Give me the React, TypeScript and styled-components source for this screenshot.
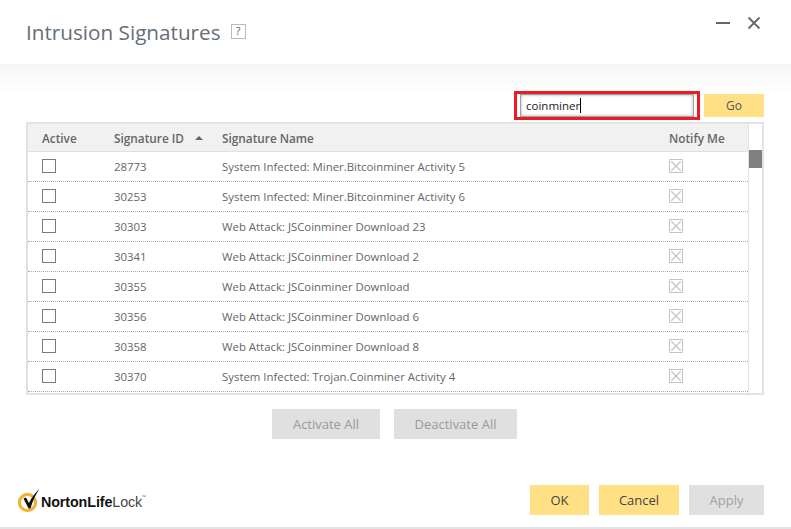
import styled, { createGlobalStyle } from "styled-components";

const rows = [
  { id: "28773", name: "System Infected: Miner.Bitcoinminer Activity 5" },
  { id: "30253", name: "System Infected: Miner.Bitcoinminer Activity 6" },
  { id: "30303", name: "Web Attack: JSCoinminer Download 23" },
  { id: "30341", name: "Web Attack: JSCoinminer Download 2" },
  { id: "30355", name: "Web Attack: JSCoinminer Download" },
  { id: "30356", name: "Web Attack: JSCoinminer Download 6" },
  { id: "30358", name: "Web Attack: JSCoinminer Download 8" },
  { id: "30370", name: "System Infected: Trojan.Coinminer Activity 4" },
];

function App() {
  return (
    <>
      <GlobalStyle />
      <Page>
        <TitleBar>
          <TitleGroup>
            <Title>Intrusion Signatures</Title>
            <HelpBox>?</HelpBox>
          </TitleGroup>
          <WindowButtons>
            <svg width="14" height="14" viewBox="0 0 14 14">
              <rect x="0" y="6" width="14" height="2" fill="#666" />
            </svg>
            <svg width="14" height="14" viewBox="0 0 14 14">
              <path d="M1.5 1.5 L12.5 12.5 M12.5 1.5 L1.5 12.5" stroke="#666" strokeWidth="1.8" fill="none" />
            </svg>
          </WindowButtons>
        </TitleBar>

        <Content>
          <SearchRow>
            <SearchFrame>
              <SearchInput>
                coinminer
                <Caret />
              </SearchInput>
            </SearchFrame>
            <GoButton>Go</GoButton>
          </SearchRow>

          <TableFrame>
            <TableArea>
              <HeaderRow>
                <ActiveCell>Active</ActiveCell>
                <IdCell>
                  Signature ID
                  <SortArrow />
                </IdCell>
                <NameCell>Signature Name</NameCell>
                <NotifyCell>Notify Me</NotifyCell>
              </HeaderRow>
              {rows.map((row) => (
                <Row key={row.id}>
                  <ActiveCell>
                    <CheckBox />
                  </ActiveCell>
                  <IdCell>{row.id}</IdCell>
                  <NameCell>{row.name}</NameCell>
                  <NotifyCell>
                    <DisabledCheck>
                      <svg width="10" height="10" viewBox="0 0 10 10">
                        <path d="M0 0 L10 10 M10 0 L0 10" stroke="#c8c8c8" strokeWidth="1.4" fill="none" />
                      </svg>
                    </DisabledCheck>
                  </NotifyCell>
                </Row>
              ))}
            </TableArea>
            <ScrollTrack>
              <ScrollThumb />
            </ScrollTrack>
          </TableFrame>

          <ActivateRow>
            <GreyButton $width={108}>Activate All</GreyButton>
            <GreyButton $width={123}>Deactivate All</GreyButton>
          </ActivateRow>
        </Content>

        <Footer>
          <Logo>
            <svg width="24" height="28" viewBox="0 0 24 28">
              <circle cx="9.5" cy="16.5" r="8.1" fill="none" stroke="#f2b233" strokeWidth="3.2" />
              <path d="M5.5 12.5 L8 11.5 L11 17 C13.5 11.5 17 7 21.5 2.5 C18 8 14.5 15 12.5 22.5 L10.5 22.5 Z" fill="#111" />
            </svg>
            <LogoText>
              <b>NortonLife</b>Lock
            </LogoText>
            <LogoMark>™</LogoMark>
          </Logo>
          <FooterButtons>
            <YellowButton $width={59}>OK</YellowButton>
            <YellowButton $width={80}>Cancel</YellowButton>
            <DisabledButton $width={75}>Apply</DisabledButton>
          </FooterButtons>
        </Footer>
      </Page>
    </>
  );
}

export default App;

const GlobalStyle = createGlobalStyle`
  html, body {
    margin: 0;
    padding: 0;
    background: #fff;
  }
  body {
    font-family: "Open Sans", "Noto Sans", sans-serif;
    color: #666;
  }
`;

const Page = styled.div`
  width: 791px;
  height: 529px;
  box-sizing: border-box;
  border-bottom: 2px solid #e4e4e4;
  overflow: hidden;
  display: flex;
  flex-direction: column;
`;

const TitleBar = styled.div`
  height: 64px;
  flex: none;
  display: flex;
  justify-content: space-between;
  padding: 0 26px;
`;

const TitleGroup = styled.div`
  display: flex;
  align-items: flex-start;
  padding-top: 17px;
`;

const Title = styled.div`
  font-size: 20.7px;
  line-height: 30px;
  color: #666e76;
`;

const HelpBox = styled.div`
  width: 13px;
  height: 13px;
  margin: 7px 0 0 10px;
  border: 1px solid #bbb;
  font-size: 10px;
  line-height: 13px;
  text-align: center;
  color: #555;
`;

const WindowButtons = styled.div`
  display: flex;
  gap: 17px;
  padding: 16px 4px 0 0;
  height: 14px;
`;

const Content = styled.div`
  flex: 1;
  padding: 27px 27px 0 26px;
  background: linear-gradient(#f6f6f6, #fff 31px);
  background-repeat: no-repeat;
`;

const SearchRow = styled.div`
  display: flex;
  justify-content: flex-end;
  align-items: center;
  gap: 4px;
  height: 29px;
  margin-bottom: 2px;
`;

const SearchFrame = styled.div`
  width: 186px;
  height: 29px;
  box-sizing: border-box;
  border: 3px solid #ed1c24;
  padding: 0 3px;
`;

const SearchInput = styled.div`
  height: 23px;
  box-sizing: border-box;
  border: 1px solid #a0a0a0;
  box-shadow: inset 0 0 3px #aaa;
  padding-left: 5px;
  font-size: 11.5px;
  line-height: 21px;
  color: #222;
  display: flex;
  background: #fff;
`;

const Caret = styled.span`
  width: 1px;
  height: 15px;
  margin-top: 3px;
  background: #000;
`;

const GoButton = styled.div`
  width: 60px;
  height: 23px;
  background: #ffe084;
  text-align: center;
  font-size: 12px;
  line-height: 23px;
  color: #555;
`;

const TableFrame = styled.div`
  width: 738px;
  height: 273px;
  box-sizing: border-box;
  border: 2px solid #e2e2e2;
  display: flex;
`;

const TableArea = styled.div`
  flex: 1;
  overflow: hidden;
`;

const HeaderRow = styled.div`
  height: 28px;
  box-sizing: border-box;
  background: #f1f1f1;
  border-bottom: 1px solid #e0e0e0;
  display: flex;
  align-items: center;
  font-size: 11.8px;
  font-weight: 600;
  color: #666;
`;

const Row = styled.div`
  height: 30px;
  box-sizing: border-box;
  border-bottom: 1px dotted #aaa;
  display: flex;
  align-items: center;
  font-size: 11.4px;
  color: #666;
`;

const ActiveCell = styled.div`
  width: 86px;
  padding-left: 14px;
  box-sizing: border-box;
  flex: none;
`;

const IdCell = styled.div`
  width: 108px;
  flex: none;
  display: flex;
  align-items: center;
`;

const NameCell = styled.div`
  width: 447px;
  flex: none;
  white-space: nowrap;
`;

const NotifyCell = styled.div`
  flex: 1;
  white-space: nowrap;
`;

const SortArrow = styled.span`
  width: 0;
  height: 0;
  margin-left: 11px;
  border-left: 4px solid transparent;
  border-right: 4px solid transparent;
  border-bottom: 4px solid #666;
`;

const CheckBox = styled.div`
  width: 12px;
  height: 12px;
  border: 1px solid #7a7a7a;
  margin-bottom: 1px;
`;

const DisabledCheck = styled.div`
  width: 12px;
  height: 12px;
  border: 1px solid #c4c4c4;
  display: flex;
  align-items: center;
  justify-content: center;
  margin-bottom: 1px;
`;

const ScrollTrack = styled.div`
  width: 13px;
  flex: none;
  border-left: 1px solid #e2e2e2;
`;

const ScrollThumb = styled.div`
  height: 18px;
  margin-top: 26px;
  background: #808080;
`;

const ActivateRow = styled.div`
  display: flex;
  justify-content: center;
  gap: 14px;
  margin-top: 14px;
  padding-right: 1px;
`;

const Button = styled.div<{ $width: number }>`
  width: ${({ $width }) => $width}px;
  height: 30px;
  text-align: center;
  font-size: 13px;
  line-height: 30px;
`;

const GreyButton = styled(Button)`
  background: #e0e0e0;
  color: #9a9a9a;
`;

const YellowButton = styled(Button)`
  background: #ffe084;
  color: #444;
`;

const DisabledButton = styled(Button)`
  background: #e0e0e0;
  color: #a0a0a0;
`;

const Footer = styled.div`
  height: 42px;
  flex: none;
  display: flex;
  justify-content: space-between;
  align-items: flex-start;
  padding: 0 27px 0 18px;
`;

const Logo = styled.div`
  display: flex;
  align-items: center;
  height: 30px;
`;

const LogoText = styled.div`
  font-family: "Liberation Sans", sans-serif;
  font-size: 14.3px;
  letter-spacing: -0.1px;
  color: #444;
  margin: 3px 0 0 -1px;
  b {
    color: #111;
  }
`;

const LogoMark = styled.span`
  font-size: 5px;
  margin: -6px 0 0 0;
`;

const FooterButtons = styled.div`
  display: flex;
  gap: 10px;
`;
